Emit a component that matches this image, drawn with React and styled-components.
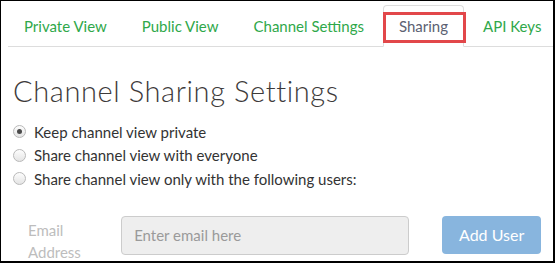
import React, { useState } from 'react';
import styled, { createGlobalStyle } from 'styled-components';

const GlobalStyle = createGlobalStyle`
    html, body {
        margin: 0;
        padding: 0;
        background: #ffffff;
    }
    * {
        box-sizing: border-box;
    }
`;

const Frame = styled.div`
    width: 555px;
    height: 263px;
    overflow: hidden;
    border: 1px solid #000;
    border-right-width: 2px;
    border-bottom-width: 2px;
    background: #fff;
    font-family: Lato, "Noto Sans", sans-serif;
`;

const TabBar = styled.ul`
    display: flex;
    list-style: none;
    margin: 4px 0 0 7px;
    padding: 0;
    border-bottom: 1px solid #dddddd;
`;

const Tab = styled.li`
    position: relative;
    flex-shrink: 0;
    white-space: nowrap;
    height: 42px;
    margin-right: 3px;
    margin-bottom: -1px;
    padding: 0 15px;
    display: flex;
    align-items: center;
    font-size: 15px;
    color: ${({ $active }) => ($active ? '#5b6172' : '#2fa84a')};
    border: 1px solid ${({ $active }) => ($active ? '#dddddd' : 'transparent')};
    border-bottom-color: ${({ $active }) => ($active ? '#ffffff' : 'transparent')};
    border-radius: 4px 4px 0 0;
    background: ${({ $active }) => ($active ? '#ffffff' : 'transparent')};
    cursor: pointer;
`;

const Highlight = styled.span`
    position: absolute;
    left: -1px;
    right: -3px;
    top: 6px;
    bottom: 3px;
    border: 3px solid #e2474a;
    pointer-events: none;
`;

const Content = styled.div`
    padding: 0 12px;
`;

const Heading = styled.h2`
    margin: 27px 0 12px 0;
    font-weight: 300;
    font-size: 29px;
    line-height: 34px;
    color: #3d3a3a;
    letter-spacing: 0.6px;
`;

const RadioList = styled.div`
    display: flex;
    flex-direction: column;
`;

const RadioRow = styled.label`
    display: flex;
    align-items: center;
    height: 23.5px;
    font-size: 15px;
    color: #333;
    cursor: pointer;
`;

const RadioDot = styled.span`
    width: 13px;
    height: 13px;
    margin-right: 8px;
    border-radius: 50%;
    border: 1px solid #b9b9b9;
    background: linear-gradient(#fdfdfd, #e4e4e4);
    display: flex;
    align-items: center;
    justify-content: center;
    &::after {
        content: '';
        width: 5px;
        height: 5px;
        border-radius: 50%;
        background: ${({ $checked }) => ($checked ? '#4a4a4a' : 'transparent')};
    }
`;

const FormRow = styled.div`
    display: flex;
    align-items: flex-start;
    margin: 25px 0 0 15px;
`;

const FieldLabel = styled.div`
    width: 60px;
    margin-right: 34px;
    padding-top: 3px;
    font-size: 15px;
    line-height: 22px;
    color: #bdbdbd;
`;

const EmailInput = styled.input`
    width: 292px;
    height: 39px;
    padding: 0 12px;
    border: 1px solid #cccccc;
    border-radius: 4px;
    background: #eeeeee;
    font-family: Lato, "Noto Sans", sans-serif;
    font-size: 15px;
    color: #555;
    outline: none;
    &::placeholder {
        color: #9a9a9a;
    }
`;

const AddButton = styled.button`
    width: 100px;
    height: 38px;
    margin-left: 33px;
    border: none;
    border-radius: 4px;
    background: #88b5de;
    color: #fff;
    font-family: Lato, "Noto Sans", sans-serif;
    font-size: 16px;
    cursor: pointer;
`;

const tabs = ['Private View', 'Public View', 'Channel Settings', 'Sharing', 'API Keys'];

const options = [
    'Keep channel view private',
    'Share channel view with everyone',
    'Share channel view only with the following users:'
];

const App = () => {
    const [choice, setChoice] = useState(0);
    return (
        <>
            <GlobalStyle />
            <Frame>
                <TabBar>
                    {tabs.map((t) => (
                        <Tab key={t} $active={t === 'Sharing'}>
                            {t}
                            {t === 'Sharing' && <Highlight />}
                        </Tab>
                    ))}
                </TabBar>
                <Content>
                    <Heading>Channel Sharing Settings</Heading>
                    <RadioList>
                        {options.map((o, i) => (
                            <RadioRow key={o} onClick={() => setChoice(i)}>
                                <RadioDot $checked={choice === i} />
                                {o}
                            </RadioRow>
                        ))}
                    </RadioList>
                    <FormRow>
                        <FieldLabel>Email Address</FieldLabel>
                        <EmailInput placeholder="Enter email here" />
                        <AddButton>Add User</AddButton>
                    </FormRow>
                </Content>
            </Frame>
        </>
    );
};

export default App;
